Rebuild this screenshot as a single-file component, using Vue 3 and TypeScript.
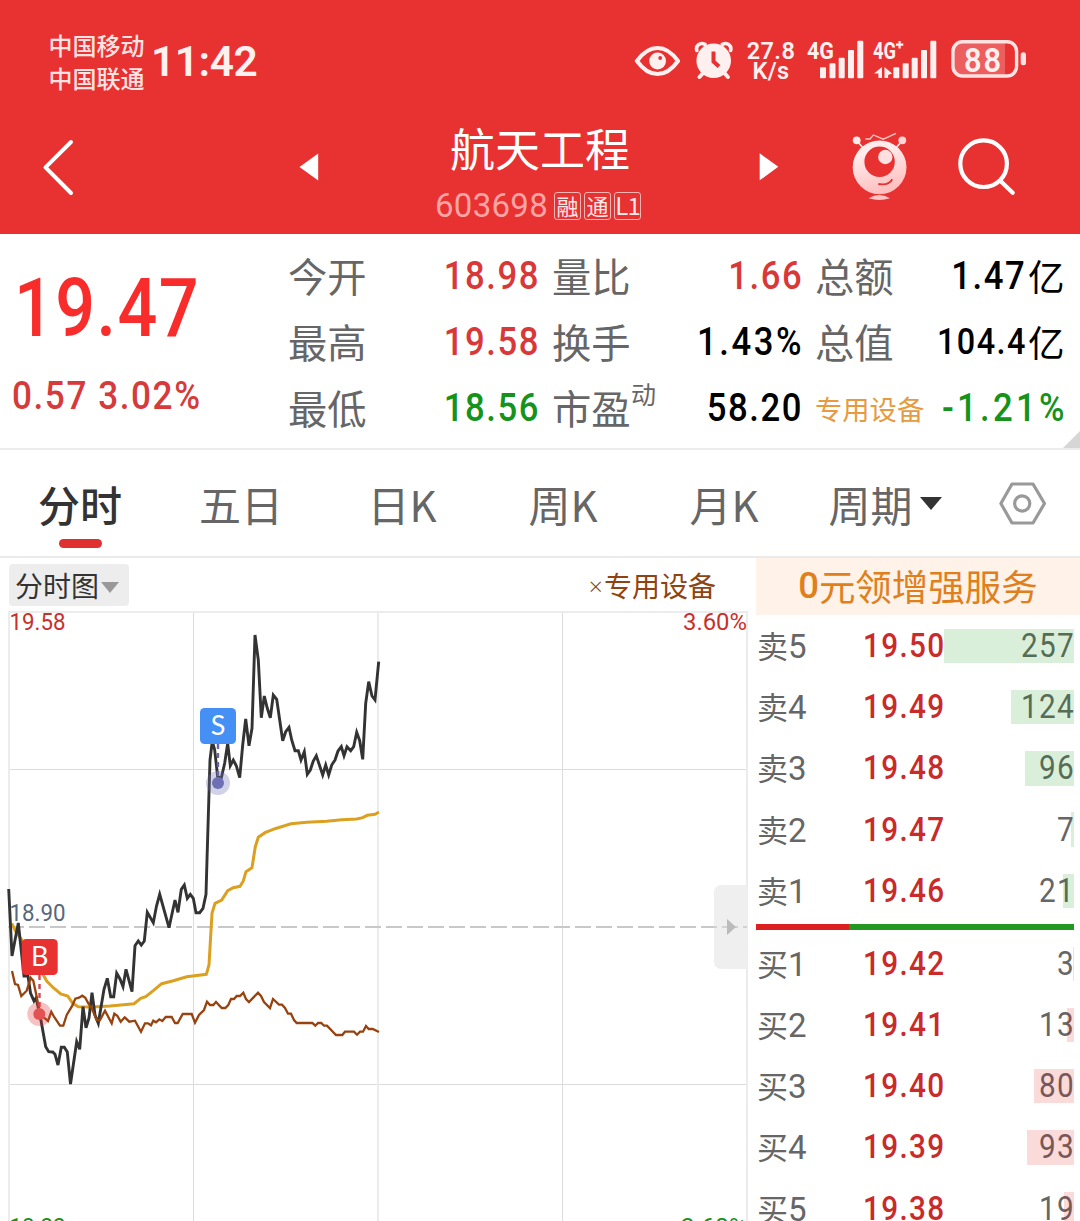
<script setup lang="ts">
interface Metric {
  label: string
  sup?: string
  value: string
  unit?: string
  tone: 'up' | 'down' | 'flat'
  compact?: boolean
  sector?: boolean
}

interface Level {
  name: string
  price: string
  volume: number
}

const metrics: Metric[] = [
  { label: '今开', value: '18.98', tone: 'up' },
  { label: '量比', value: '1.66', tone: 'up' },
  { label: '总额', value: '1.47', unit: '亿', tone: 'flat' },
  { label: '最高', value: '19.58', tone: 'up' },
  { label: '换手', value: '1.43%', tone: 'flat' },
  { label: '总值', value: '104.4', unit: '亿', tone: 'flat', compact: true },
  { label: '最低', value: '18.56', tone: 'down' },
  { label: '市盈', sup: '动', value: '58.20', tone: 'flat' },
  { label: '专用设备', value: '-1.21%', tone: 'down', sector: true },
]

const tabs: string[] = ['分时', '五日', '日K', '周K', '月K', '周期']

const asks: Level[] = [
  { name: '卖5', price: '19.50', volume: 257 },
  { name: '卖4', price: '19.49', volume: 124 },
  { name: '卖3', price: '19.48', volume: 96 },
  { name: '卖2', price: '19.47', volume: 7 },
  { name: '卖1', price: '19.46', volume: 21 },
]
const bids: Level[] = [
  { name: '买1', price: '19.42', volume: 3 },
  { name: '买2', price: '19.41', volume: 13 },
  { name: '买3', price: '19.40', volume: 80 },
  { name: '买4', price: '19.39', volume: 93 },
  { name: '买5', price: '19.38', volume: 19 },
]
const sides = [
  { kind: 'ask', levels: asks },
  { kind: 'bid', levels: bids },
]
const maxVolume = Math.max(...asks.concat(bids).map((l) => l.volume))
const barWidth = (volume: number): string => `${((volume / maxVolume) * 130).toFixed(1)}px`

const priceLine =
  '8.7,889 12,956 18.3,923 24,976 28,976 30.5,993 34,1001 36,998 40,1015 45.7,1046.7 48.7,1051.7 52.7,1052 55,1054.3 58,1065 61.3,1047.3 64.3,1047.3 67.3,1052 70.5,1084 76.7,1041.7 79.7,1049.3 83,1006.7 86,1027.7 89,1018 92,992.7 95,1015 98.3,1023.3 104,989.3 107.3,978.3 110.7,996.7 113.7,996.7 116.7,973.3 120,979 123,986.7 126,969.3 132,991.7 135,945.7 138.3,941 141.3,945 144.3,941 147.3,912.3 153.3,922.7 156.5,906 159.7,894.3 169,927.7 175,900 178,912.3 181.3,889.3 184.3,885 187.3,898.3 190.3,894.3 193.3,898.3 196,912.7 199.7,912.7 203,908.3 206,894.3 207,860 210,760 212.3,741 214.7,750 217.7,777 221.3,778 224.7,763 227.7,743.3 230.3,765.7 233.3,760 236.3,765.7 239.7,777.7 242.7,745 245.7,719 249,745.7 252,728.3 255,635 258.3,660 261.3,717.7 264.3,696 267.3,708.3 270.3,717.7 273.3,695 276.7,699.3 279.7,720 282.7,740.7 285.7,731.7 289,727.3 291.7,740 295,750.7 298.3,750.7 301,760 304.3,751.7 307.3,774.3 310.3,770 313.3,761 316.3,755.7 322.7,775 325.7,765 328.7,775 331.7,765 335,760 338,751 341.3,746.7 344,755.7 347,746.7 350.7,750.7 353.7,746.7 356.7,732.3 359.7,740.7 362.7,759.3 365.7,703.3 368.7,681.7 372,696 375,700 378.7,661.7'
const averageLine =
  '11.7,923.3 16,932 22,940 30,953 36,965 43.3,975 46.7,981 53.3,987.7 60.7,994 67.7,996 72.7,1003.3 78.3,1006.7 91.7,1007 110,1006 134,1003.7 140.7,998.3 145.7,996.7 153.3,990.7 161.7,983.7 173.3,980.7 186.7,976.7 206.3,974.3 209,965 212,913.3 215,903.3 221.7,900 227.7,890.7 233.3,887.7 240,886.3 243.3,881 246,871.7 252,867.7 255.3,846.7 258.3,837.3 265,832.7 275,828.7 291,823.7 306.7,822.3 326.7,821.3 341.7,819.7 356.7,819 362.7,817.7 367.3,815.3 375,814.3 379,812'
const sectorLine =
  '12,971 15,984 18,985 21.3,996 26.7,990.7 30.7,977.7 33.3,980.7 36.7,996.7 40,1015 45,1018.3 48,1021 51.3,1011.7 54,1016.7 60,1025.7 63.3,1025.7 66.7,1015 72.3,1005.7 75.3,998.7 79,997.7 82.3,995.7 85.3,997.7 88.3,1003.3 91.7,1008.3 96.7,1020 100,1020 105,1010.7 111.7,1023.3 114.3,1013.7 117.3,1015.7 120.7,1021.7 124.7,1017.3 129.3,1021.7 135,1020.7 141,1031.7 145,1023.3 148,1023.3 151,1025.3 153.3,1020.7 156,1022.3 159.3,1019.3 162.3,1021 165.7,1017 171.7,1017 175,1023 177.7,1023 182.7,1014 191.7,1014 195,1022.7 199,1015 204,1010 207,1001.7 210,1005 213.3,1005 216,1002 221.7,1008 225.3,1008 228.3,1005 231,999 234,999 236.7,996 240,996 243.3,992.7 246,999 249,1002 258,992.7 261,996 264,1002 270,1008 273,999 279,1004.7 282,1004.7 285,1008 288,1013.7 291,1013.7 294,1020 296.7,1023 312.3,1023 315.3,1025.7 318,1023 321.3,1023 324,1025.7 327,1025.7 336,1035 342.3,1035 345,1031.7 354,1031.7 357,1034.7 360,1031.7 363,1031.7 366,1026 368.7,1029 372.7,1029 379,1032'
</script>

<template>
  <div class="app">
    <header class="header">
      <div class="status">
        <div class="carriers">
          <span>中国移动</span>
          <span>中国联通</span>
        </div>
        <span class="clock">11:42</span>
        <div class="indicators">
          <svg width="46" height="50" viewBox="634 36 46 50" fill="none">
            <path d="M637 61C643 52.500 650 48 657.600 48S672 52.500 678 61C672 69.500 665.200 74 657.600 74S643 69.500 637 61Z" stroke="#fff0f0" stroke-width="4" />
            <circle cx="657.600" cy="61" r="8.400" fill="#fff0f0" />
            <circle cx="660.200" cy="58" r="1.900" fill="#e83131" />
          </svg>
          <svg class="alarm" width="40" height="50" viewBox="694 36 40 50" fill="none">
            <circle cx="713.700" cy="60.700" r="17.300" fill="#fff0f0" />
            <path d="M696.800 50.500C695.500 45.500 700 42 705 44.300M730.600 50.500C731.900 45.500 727.400 42 722.400 44.300" stroke="#fff0f0" stroke-width="3.600" stroke-linecap="round" />
            <path d="M703 73L699.500 77M724.400 73L727.900 77" stroke="#fff0f0" stroke-width="4" stroke-linecap="round" />
            <path d="M713.500 51.500V61.500L719 66.500" stroke="#e83131" stroke-width="4" />
          </svg>
          <div class="speed"><span>27.8</span><span>K/s</span></div>
          <svg class="signal" width="58" height="50" viewBox="806 36 58 50" fill="#fff0f0">
            <text class="sig-text" x="807" y="58.700" textLength="27" lengthAdjust="spacingAndGlyphs">4G</text>
            <path d="M820 68.300q0-1 1-1h4q1 0 1 1v9q0 1-1 1h-4q-1 0-1-1zM829.500 64.300q0-1 1-1h4q1 0 1 1v13q0 1-1 1h-4q-1 0-1-1zM838.700 58.700q0-1 1-1h4q1 0 1 1v18.600q0 1-1 1h-4q-1 0-1-1zM848 51q0-1 1-1h4q1 0 1 1v26.300q0 1-1 1h-4q-1 0-1-1zM857.300 41.700q0-1 1-1h4q1 0 1 1v35.600q0 1-1 1h-4q-1 0-1-1z" />
          </svg>
          <svg class="signal2" width="66" height="50" viewBox="872 36 66 50" fill="#fff0f0">
            <text class="sig-text" x="873" y="58.700" textLength="23" lengthAdjust="spacingAndGlyphs">4G</text>
            <path d="M898.500 41h2.200v2.600h2.600v2.200h-2.600v2.600h-2.200v-2.600h-2.600v-2.200h2.600z" />
            <path d="M882 67v11h-3.600v-4.500H874zM884.500 67v11h3.600v-3l4-1.500z" />
            <path d="M893.300 68.300q0-1 1-1h4q1 0 1 1v9q0 1-1 1h-4q-1 0-1-1zM902.700 64.300q0-1 1-1h4q1 0 1 1v13q0 1-1 1h-4q-1 0-1-1zM911.700 58.700q0-1 1-1h4q1 0 1 1v18.600q0 1-1 1h-4q-1 0-1-1zM921 51q0-1 1-1h4q1 0 1 1v26.300q0 1-1 1h-4q-1 0-1-1zM930.300 41.700q0-1 1-1h4q1 0 1 1v35.600q0 1-1 1h-4q-1 0-1-1z" />
          </svg>
          <svg class="battery" width="77" height="50" viewBox="950 36 77 50" fill="none">
            <path d="M962 43H1005V75H962Q954.500 75 954.500 67V51Q954.500 43 962 43Z" fill="#fff" fill-opacity=".22" />
            <rect x="953" y="41.700" width="63.600" height="34.300" rx="9.500" stroke="#ffe3e3" stroke-width="3.400" />
            <rect x="1020.700" y="52.300" width="5.300" height="13" rx="2.500" fill="#ffe3e3" />
            <text class="bat-text" x="964" y="71.800" textLength="39" lengthAdjust="spacingAndGlyphs">88</text>
          </svg>
        </div>
      </div>

      <div class="nav">
        <svg width="44" height="70" viewBox="36 131 44 70" fill="none">
          <path d="M71 141L45.500 166.300L71 192" stroke="#fff" stroke-width="4" stroke-linecap="round" stroke-linejoin="round" />
        </svg>
        <svg class="prev" width="20" height="30" viewBox="299 151 20 30"><path d="M299.500 166L318.200 152.500V179.500Z" fill="#fff" /></svg>
        <div class="title">
          <h1>航天工程</h1>
          <div class="sub">
            <span class="code">603698</span>
            <span class="tag">融</span>
            <span class="tag">通</span>
            <span class="tag narrow">L1</span>
          </div>
        </div>
        <svg class="next" width="20" height="30" viewBox="759 151 20 30"><path d="M778.300 165.800L759.700 152.300V179.300Z" fill="#fff" /></svg>
        <svg class="mascot" width="60" height="74" viewBox="850 130 60 74" fill="none">
          <defs>
            <linearGradient id="skin" x1="0.3" y1="0" x2="0.6" y2="1">
              <stop offset="0.2" stop-color="#ffeded" />
              <stop offset="1" stop-color="#ffbcbc" />
            </linearGradient>
          </defs>
          <path d="M857 141L864 149M902 141L895 149" stroke="#ffe6e6" stroke-width="1.800" />
          <path d="M865.300 139H870L873.300 135L883.300 139.200L896 133.300" stroke="#ffc6c6" stroke-width="1.300" />
          <circle cx="856.700" cy="140.300" r="3.900" fill="#ffe9e9" />
          <circle cx="902.300" cy="140.300" r="3.900" fill="#ffd6d6" />
          <circle cx="879.600" cy="167.300" r="26.900" fill="url(#skin)" />
          <circle cx="879.600" cy="161.700" r="15.200" fill="#e83131" />
          <circle cx="885.300" cy="157" r="7.200" fill="#ffe0e0" />
          <path d="M878.300 184Q888.500 186 892.300 179.300" stroke="#e83131" stroke-width="1.800" />
          <path d="M868.700 198.300Q879.300 191.500 890 198.300Q879.300 201.500 868.700 198.300Z" fill="#ffc4c4" />
        </svg>
        <svg class="search" width="60" height="62" viewBox="956 136 60 62" fill="none" stroke="#fff" stroke-width="4.200">
          <circle cx="983.600" cy="163.700" r="23.300" />
          <path d="M1001 181.500L1012.700 192.800" stroke-linecap="round" />
        </svg>
      </div>
    </header>

    <section class="quote">
      <div class="last">
        <span class="num price">19.47</span>
        <span class="num change">0.57 3.02%</span>
      </div>
      <div class="metrics">
        <div v-for="m in metrics" :key="m.label" class="metric">
          <span class="label" :class="{ sector: m.sector }">{{ m.label }}<sup v-if="m.sup">{{ m.sup }}</sup></span>
          <span class="value" :class="[m.tone, { compact: m.compact }]"><span class="num" :class="{ percent: m.value.endsWith('%'), signed: m.value.startsWith('-') }">{{ m.value }}</span><span v-if="m.unit" class="unit">{{ m.unit }}</span></span>
        </div>
      </div>
      <i class="corner"></i>
    </section>

    <nav class="tabs">
      <div v-for="(t, i) in tabs" :key="t" class="tab" :class="{ active: i === 0 }">
        <span>{{ t }}</span><i v-if="i === 5" class="caret"></i>
      </div>
      <div class="settings">
        <svg width="48" height="46" viewBox="999 481 48 46" fill="none" stroke="#999" stroke-width="3.200">
          <path d="M1012 485H1033L1044.500 504.500L1033 524H1012L1000.900 504.500Z" stroke-linejoin="round" />
          <circle cx="1022.200" cy="504.500" r="7.600" />
        </svg>
      </div>
    </nav>

    <main class="board">
      <section class="chart">
        <div class="chart-head">
          <button class="mode">分时图<i></i></button>
          <span class="overlay-name"><small>×</small>专用设备</span>
        </div>
        <svg class="plot" width="756" height="612" viewBox="0 609 756 612" fill="none">
          <path d="M193.500 612V1221M562.500 612V1221M9 769.500H747M9 1084.500H747" stroke="#dcdcdc" stroke-width="1" />
          <path d="M9 1221V612H747V1221M378 612V1221" stroke="#ececec" stroke-width="2" />
          <path d="M8 927H747" stroke="#c8c8c8" stroke-width="2" stroke-dasharray="16 5" />
          <path d="M747 885H722Q714 885 714 893V961Q714 969 722 969H747Z" fill="#efefef" />
          <path d="M714 927H747" stroke="#d2d2d2" stroke-width="2" stroke-dasharray="16 5" stroke-dashoffset="13" />
          <path d="M727 919V935L736 927Z" fill="#bbb" />
          <g class="axis">
            <text x="9.500" y="630" textLength="56" lengthAdjust="spacingAndGlyphs" fill="#c9302c">19.58</text>
            <text x="683" y="630" textLength="64" lengthAdjust="spacingAndGlyphs" fill="#c9302c">3.60%</text>
            <text x="9.500" y="1235" textLength="56" lengthAdjust="spacingAndGlyphs" fill="#1a921a">18.22</text>
            <text x="674" y="1235" textLength="73" lengthAdjust="spacingAndGlyphs" fill="#1a921a">-3.60%</text>
          </g>
          <polyline :points="averageLine" stroke="#dca021" stroke-width="3" />
          <polyline :points="priceLine" stroke="#333" stroke-width="2.900" />
          <polyline :points="sectorLine" stroke="#96430f" stroke-width="2.300" />
          <g class="axis"><text x="9.500" y="921" textLength="56" lengthAdjust="spacingAndGlyphs" fill="#56687b">18.90</text></g>

          <path d="M218 744V777" stroke="#6565ad" stroke-width="2.400" stroke-dasharray="5 4" />
          <circle cx="218" cy="783" r="12" fill="#6f6fb5" fill-opacity=".32" />
          <circle cx="218" cy="783" r="6" fill="#6f6fb5" />
          <rect x="200" y="708" width="36" height="36" rx="4.500" fill="#4590f5" />
          <text class="flag" x="218" y="735">S</text>

          <path d="M39.500 975V1008" stroke="#d64550" stroke-width="2.400" stroke-dasharray="5 4" />
          <circle cx="39.300" cy="1014" r="12" fill="#e83131" fill-opacity=".3" />
          <circle cx="39.300" cy="1014" r="6" fill="#e25252" />
          <rect x="21.700" y="939" width="36" height="36" rx="4.500" fill="#e83131" />
          <text class="flag" x="39.700" y="966">B</text>
        </svg>
      </section>

      <aside class="book">
        <div class="promo"><span>0</span>元领增强服务</div>
        <template v-for="side in sides" :key="side.kind">
          <div v-for="l in side.levels" :key="l.name" class="level" :class="side.kind">
            <span class="name">{{ l.name[0] }}<b>{{ l.name[1] }}</b></span>
            <span class="num cost">{{ l.price }}</span>
            <span class="vol">
              <span class="num">{{ l.volume }}</span>
              <i class="bar" :style="{ width: barWidth(l.volume) }"></i>
            </span>
          </div>
          <div v-if="side.kind === 'ask'" class="ratio"><i></i></div>
        </template>
      </aside>
    </main>
  </div>
</template>

<style>
body {
  background: #fff;
}
</style>

<style scoped>
.app {
  display: flex;
  flex-direction: column;
  width: 1080px;
  height: 1221px;
  overflow: hidden;
  background: #fff;
  font-family: 'Noto Sans CJK SC', sans-serif;
  color: #666;
}
.app * {
  box-sizing: border-box;
}
svg {
  display: block;
  flex: none;
}
.num {
  display: inline-block;
  font-family: Roboto, sans-serif;
  font-weight: 500;
  line-height: 1;
  white-space: pre;
  letter-spacing: 0.045em;
  margin-right: -0.045em;
  transform: scaleX(0.9);
  transform-origin: right center;
}

.header {
  height: 234px;
  background: #e83131;
  color: #fff;
}
.status {
  display: flex;
  align-items: center;
  height: 122px;
  padding: 0 54px 0 48.500px;
  color: #fff0f0;
}
.carriers {
  display: flex;
  flex-direction: column;
  font-size: 24px;
  font-weight: 500;
  line-height: 33px;
  color: #ffe3e3;
}
.clock {
  margin-left: 6.500px;
  font-family: Roboto, sans-serif;
  font-size: 42.500px;
  font-weight: 600;
  letter-spacing: -0.5px;
}
.indicators {
  display: flex;
  align-items: center;
  margin-left: auto;
}
.alarm {
  margin-left: 14px;
}
.speed {
  display: flex;
  flex-direction: column;
  align-items: center;
  width: 50px;
  margin-left: 12px;
  font-family: Roboto, sans-serif;
  font-size: 23.500px;
  font-weight: 600;
  line-height: 20.500px;
}
.speed span {
  letter-spacing: 0.4px;
}
.signal {
  margin-left: 10px;
}
.signal2 {
  margin-left: 8px;
}
.battery {
  margin-left: 12px;
  margin-right: -1px;
}
.sig-text {
  font: 700 24px Roboto, sans-serif;
}
.bat-text {
  font: 600 33px Roboto, sans-serif;
  letter-spacing: 2px;
  fill: #fff0f0;
}
.nav {
  display: flex;
  align-items: center;
  height: 112px;
  padding-left: 36px;
}
.nav > svg {
  margin-top: -23px;
}
.nav > .prev {
  margin-left: 219px;
}
.title {
  display: flex;
  flex-direction: column;
  align-items: center;
  width: 220px;
  height: 112px;
  margin-left: 109px;
}
h1 {
  margin: 1px 0 0 4px;
  font-size: 45px;
  font-weight: 400;
  line-height: 50px;
}
.sub {
  display: flex;
  align-items: center;
  gap: 3px;
  height: 30px;
  margin-top: 18px;
}
.nav > .next {
  margin-left: 111px;
}
.nav > .mascot {
  margin-left: 71px;
}
.nav > .search {
  margin-left: 46px;
}
.code {
  margin-right: 3px;
  font-family: Roboto, sans-serif;
  font-size: 33px;
  line-height: 30px;
  letter-spacing: 0.3px;
  color: #fba4a4;
}
.tag {
  display: flex;
  align-items: center;
  justify-content: center;
  width: 27px;
  height: 28px;
  border: 1px solid #f9b4b4;
  border-radius: 3px;
  padding-bottom: 2px;
  font-size: 22px;
  line-height: 24px;
  color: #ffe6e6;
}
.narrow {
  font-size: 24px;
  letter-spacing: -1px;
}

.quote {
  position: relative;
  display: flex;
  height: 216px;
  border-bottom: 2px solid #ececec;
}
.last {
  display: flex;
  flex-direction: column;
  align-items: flex-start;
  width: 288.500px;
  padding: 33px 0 0 12px;
}
.last .num {
  transform-origin: left center;
}
.last .price {
  margin-left: 2px;
  font-size: 82px;
  letter-spacing: 0.02em;
  color: #f92c2c;
  transform: scaleX(0.855);
}
.change {
  margin-top: 28px;
  font-size: 39px;
  color: #d63a3a;
}
.metrics {
  display: grid;
  grid-template-columns: 250px 249px 249px;
  grid-auto-rows: 66px;
  column-gap: 14px;
  padding-top: 9px;
}
.metric {
  display: flex;
  align-items: center;
  justify-content: space-between;
}
.label {
  position: relative;
  margin-top: -2px;
  margin-left: -0.5px;
  font-size: 39.300px;
  line-height: 66px;
}
.label sup {
  position: absolute;
  left: 79px;
  top: -14px;
  font-size: 25px;
}
.label.sector {
  margin-top: -1px;
  font-size: 27.300px;
  color: #e79a40;
}
.value {
  display: flex;
  align-items: center;
  font-size: 38.500px;
  line-height: 66px;
}
.value .percent {
  letter-spacing: 0.075em;
  margin-right: -0.075em;
}
.value .signed {
  letter-spacing: 0.095em;
  margin-right: -0.095em;
}
.value.up {
  color: #d93838;
}
.value.down {
  color: #15931a;
}
.value.flat {
  color: #000;
}
.value.compact {
  font-size: 36px;
}
.unit {
  margin-left: 3px;
  font-size: 36.500px;
  line-height: 60px;
}
.corner {
  position: absolute;
  right: 0;
  bottom: 0;
  border-left: 17px solid transparent;
  border-bottom: 17px solid #d6d6d6;
}

.tabs {
  display: flex;
  height: 108px;
  border-bottom: 2px solid #ebebeb;
}
.tab {
  position: relative;
  display: flex;
  align-items: center;
  justify-content: center;
  width: 161px;
  padding-right: 1px;
  font-size: 42px;
  line-height: 105px;
}
.tab.active {
  font-weight: 500;
  color: #333;
}
.tab.active::after {
  content: '';
  position: absolute;
  left: 59px;
  top: 89px;
  width: 43px;
  height: 9px;
  border-radius: 5px;
  background: #e03030;
}
.caret {
  margin-left: 7px;
  border: 11.500px solid transparent;
  border-top: 13px solid #333;
  border-bottom: 0;
}
.settings {
  display: flex;
  align-items: center;
  justify-content: center;
  width: 114px;
}

.board {
  display: flex;
  height: 663px;
}
.chart {
  width: 756px;
}
.chart-head {
  display: flex;
  align-items: center;
  justify-content: space-between;
  height: 51px;
  padding: 3px 40px 0 9px;
}
.mode {
  display: flex;
  align-items: center;
  width: 120px;
  height: 42px;
  padding: 0 0 0 6px;
  border: 0;
  border-radius: 4px;
  background: #ededed;
  font: 28px/38px 'Noto Sans CJK SC', sans-serif;
  color: #333;
}
.mode i {
  margin: 4px 0 0 2px;
  border: 9px solid transparent;
  border-top: 11px solid #999;
  border-bottom: 0;
}
.overlay-name {
  display: flex;
  align-items: center;
  font-size: 28px;
  line-height: 41px;
  color: #8f4312;
}
.overlay-name small {
  padding-top: 2px;
  font-size: 16.500px;
}
.axis text {
  font: 400 23px Roboto, sans-serif;
}
.flag {
  font: 400 27px Lato, sans-serif;
  fill: #fff;
  text-anchor: middle;
}

.book {
  width: 324px;
}
.promo {
  display: flex;
  align-items: center;
  justify-content: center;
  height: 57px;
  margin-bottom: 0.400px;
  background: #fef2e9;
  font-size: 36.500px;
  line-height: 53px;
  padding-bottom: 2px;
  color: #e07f1b;
}
.promo span {
  font-family: Roboto, sans-serif;
  font-weight: 500;
}
.level {
  display: flex;
  align-items: center;
  height: 61.200px;
  padding-right: 6px;
}
.name {
  width: 107px;
  padding-left: 1px;
  font-size: 31px;
  line-height: 56px;
}
.name b {
  font-family: Roboto, sans-serif;
  font-size: 33px;
  font-weight: 400;
}
.cost {
  width: 81px;
  margin-top: -1px;
  font-size: 33px;
  color: #c92a2a;
  transform-origin: left center;
}
.vol {
  position: relative;
  display: flex;
  align-items: center;
  justify-content: flex-end;
  flex: 1;
  height: 34.300px;
}
.vol .num {
  margin-top: -1px;
  font-size: 33px;
  font-weight: 400;
}
.bar {
  position: absolute;
  right: 0;
  top: 0;
  height: 100%;
}
.ask .bar {
  background: rgba(8, 148, 8, 0.15);
}
.bid .bar {
  background: rgba(228, 5, 5, 0.15);
}
.ratio {
  display: flex;
  align-items: center;
  height: 12px;
  padding-right: 6px;
}
.ratio i {
  width: 100%;
  height: 6px;
  background: linear-gradient(90deg, #dc2020 0 93px, #229722 93px);
}
</style>
